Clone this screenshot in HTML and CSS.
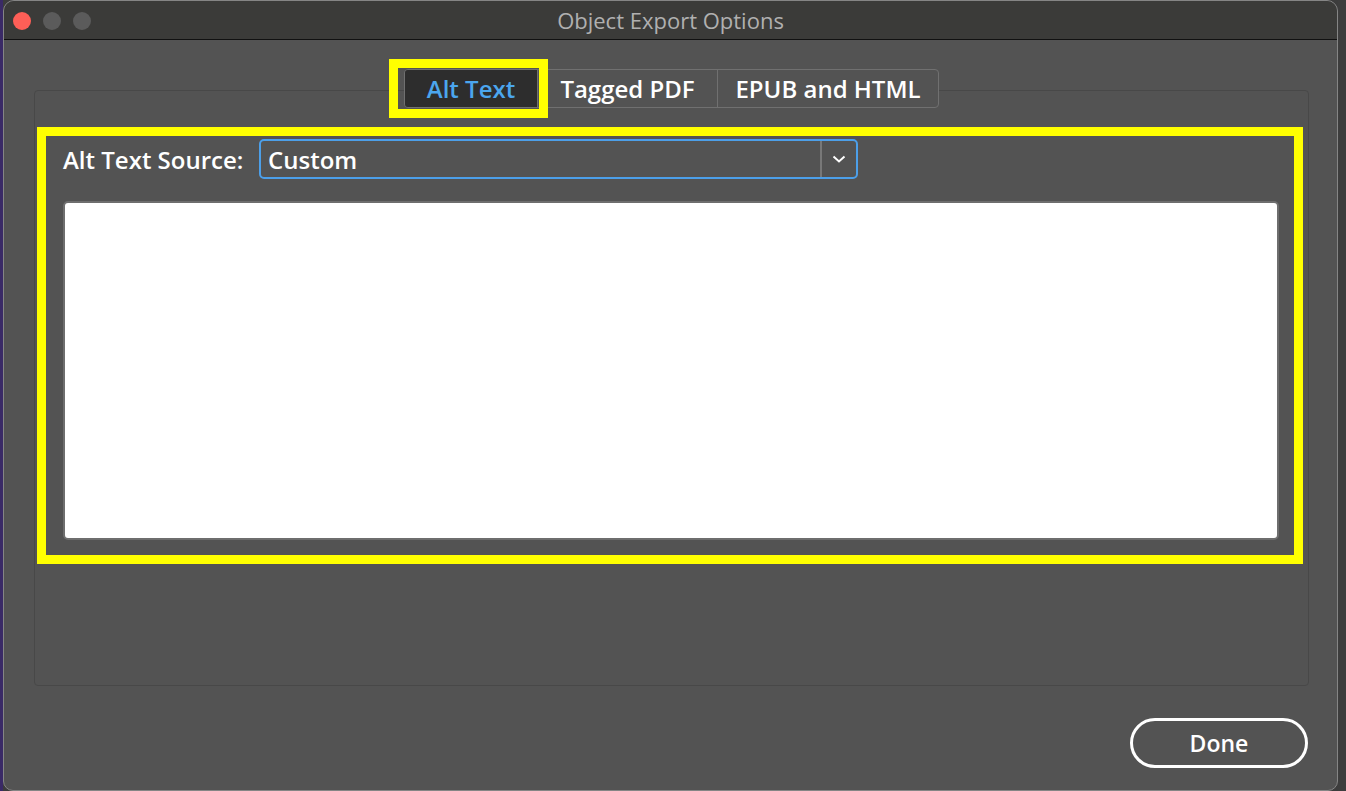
FILE: index.html
```html
<!DOCTYPE html>
<html lang="en">
  <head>
    <meta charset="UTF-8" />
    <title>Object Export Options</title>
    <link rel="stylesheet" href="styles.css">
  </head>
  <body>
    <div class="screen">
      <div class="desk-left"></div>

      <div class="window">
        <!-- Title bar with traffic lights -->
        <div class="titlebar">
          <div class="lights">
            <span class="light close"></span>
            <span class="light"></span>
            <span class="light"></span>
          </div>
          <div class="title">Object Export Options</div>
          <div></div>
        </div>

        <div class="content">
          <div class="panel">
            <!-- Segmented tabs sitting on the panel edge -->
            <div class="tabs">
              <div class="tab active">Alt Text</div>
              <div class="tab">Tagged PDF</div>
              <div class="tab">EPUB and HTML</div>
            </div>

            <div class="highlight">
              <div class="source-row">
                <span class="source-label">Alt Text Source:</span>
                <div class="select">
                  <span class="select-value">Custom</span>
                  <span class="select-arrow">
                    <svg width="14" height="8" viewBox="0 0 14 8">
                      <path d="M1.5 1.5 L7 6.5 L12.5 1.5" fill="none" stroke="#ffffff" stroke-width="2" />
                    </svg>
                  </span>
                </div>
              </div>
              <textarea class="alt-input"></textarea>
            </div>
          </div>

          <div class="actions">
            <button class="done">Done</button>
          </div>
        </div>
      </div>

      <div class="desk-right"></div>
    </div>
  </body>
</html>
```

FILE: styles.css
```css
body {
  margin: 0;
  padding: 0;
  font-family: "Open Sans", "Noto Sans", sans-serif;
  background: #3c3c3c;
  overflow: hidden;
}

.screen {
  display: flex;
  height: 791px;
}

.desk-left {
  width: 3px;
  background: #3a2a66;
}

.desk-right {
  flex-grow: 1;
  background: #3d3d3d;
}

.window {
  width: 1335px;
  box-sizing: border-box;
  height: 791px;
  background: #535353;
  border: 1px solid #858585;
  border-radius: 11px 11px 10px 10px;
  display: flex;
  flex-direction: column;
  overflow: hidden;
}

/* Title bar */
.titlebar {
  height: 38px;
  background: #3b3b39;
  border-bottom: 1px solid #111111;
  display: grid;
  grid-template-columns: 1fr auto 1fr;
  align-items: center;
}

.lights {
  display: flex;
  gap: 12px;
  padding-left: 9px;
  padding-top: 1px;
}

.light {
  width: 18px;
  height: 18px;
  border-radius: 50%;
  background: #5b5b5b;
}

.light.close {
  background: #fe5f57;
}

.title {
  color: #b0b0b0;
  font-size: 22px;
  font-weight: 500;
}

/* Dialog content */
.content {
  padding: 50px 28px 0 30px;
  display: flex;
  flex-direction: column;
}

.panel {
  height: 596px;
  box-sizing: border-box;
  border: 1px solid #484848;
  border-radius: 4px;
  display: flex;
  flex-direction: column;
}

.tabs {
  display: flex;
  align-self: center;
  margin-top: -22px;
  height: 39px;
  box-sizing: border-box;
  border: 1px solid #707070;
  border-radius: 4px;
  background: #535353;
}

.tab {
  position: relative;
  color: #ffffff;
  font-size: 24px;
  font-weight: 600;
  line-height: 37px;
  text-align: center;
  box-sizing: border-box;
  border-left: 1px solid #707070;
}

.tab:first-child {
  border-left: none;
}

.tab.active {
  background: #2d2d2d;
  color: #4ba6ee;
  border-radius: 3px 0 0 3px;
  width: 132px;
}

/* Yellow annotation box around the active tab */
.tab.active::after {
  content: "";
  position: absolute;
  top: -11px;
  left: -16px;
  right: -11px;
  bottom: -11px;
  border: 9px solid #ffff00;
}

.tab:nth-child(2) {
  width: 180px;
}

.tab:nth-child(3) {
  width: 221px;
}

.highlight {
  margin: 19px 5px 0 2px;
  border: 9px solid #ffff00;
  padding: 3px 15px 15px 17px;
  display: flex;
  flex-direction: column;
}

.source-row {
  display: flex;
  align-items: center;
  gap: 13px;
  height: 40px;
}

.source-label {
  color: #ffffff;
  font-size: 24px;
  font-weight: 600;
  width: 183px;
  white-space: nowrap;
  padding-top: 1px;
}

.select {
  width: 599px;
  height: 40px;
  box-sizing: border-box;
  border: 2px solid #4c9fe9;
  border-radius: 5px;
  display: flex;
  align-items: center;
}

.select-value {
  flex-grow: 1;
  color: #ffffff;
  font-size: 24px;
  font-weight: 600;
  padding-left: 7px;
}

.select-arrow {
  width: 34px;
  height: 100%;
  border-left: 2px solid #787878;
  display: flex;
  align-items: center;
  justify-content: center;
}

.alt-input {
  margin-top: 22px;
  height: 339px;
  box-sizing: border-box;
  background: #ffffff;
  border: 2px solid #6e6e6e;
  border-radius: 5px;
  resize: none;
  outline: none;
}

.actions {
  display: flex;
  justify-content: flex-end;
  margin-top: 32px;
  padding-right: 1px;
}

.done {
  width: 178px;
  height: 50px;
  background: transparent;
  border: 3px solid #ffffff;
  border-radius: 25px;
  color: #ffffff;
  font-family: "Open Sans", "Noto Sans", sans-serif;
  font-size: 23px;
  font-weight: 600;
  cursor: pointer;
}
```
